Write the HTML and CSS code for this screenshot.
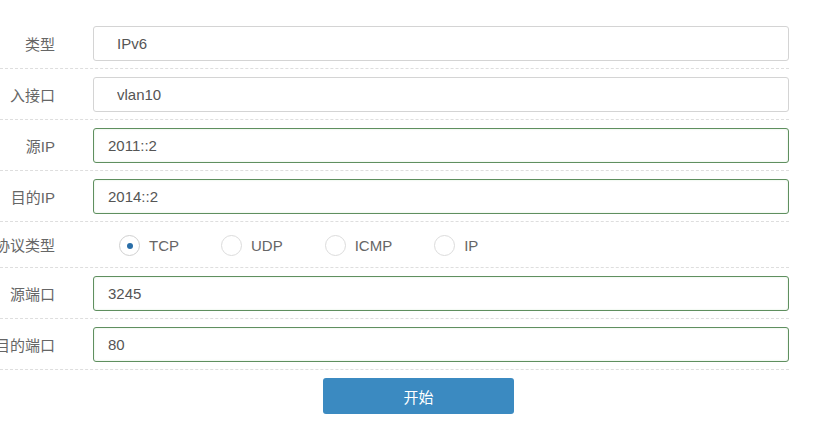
FILE: index.html
```html
<!DOCTYPE html>
<html lang="zh-CN">
<head>
    <meta charset="UTF-8">
    <meta name="viewport" content="width=device-width, initial-scale=1.0">
    <title>抓包</title>
    <link rel="stylesheet" href="styles.css">
</head>
<body>
    <form class="form" id="captureForm">
        <div class="row">
            <label class="label">类型</label>
            <div class="field"><input class="input input-plain" type="text" value="IPv6" readonly></div>
        </div>
        <div class="row">
            <label class="label">入接口</label>
            <div class="field"><input class="input input-plain" type="text" value="vlan10" readonly></div>
        </div>
        <div class="row">
            <label class="label">源IP</label>
            <div class="field"><input class="input" type="text" value="2011::2"></div>
        </div>
        <div class="row">
            <label class="label">目的IP</label>
            <div class="field"><input class="input" type="text" value="2014::2"></div>
        </div>
        <div class="row row-radio">
            <label class="label">协议类型</label>
            <div class="field radios">
                <label class="radio"><input type="radio" name="proto" checked><span class="dot"></span>TCP</label>
                <label class="radio"><input type="radio" name="proto"><span class="dot"></span>UDP</label>
                <label class="radio"><input type="radio" name="proto"><span class="dot"></span>ICMP</label>
                <label class="radio"><input type="radio" name="proto"><span class="dot"></span>IP</label>
            </div>
        </div>
        <div class="row">
            <label class="label">源端口</label>
            <div class="field"><input class="input" type="text" value="3245"></div>
        </div>
        <div class="row">
            <label class="label">目的端口</label>
            <div class="field"><input class="input" type="text" value="80"></div>
        </div>
        <div class="actions">
            <button type="submit" class="btn">开始</button>
        </div>
    </form>
</body>
</html>
```

FILE: styles.css
```css
body {
    margin: 0;
    background: #fff;
    font-family: "Liberation Sans", Arial, "Noto Sans CJK SC", sans-serif;
    color: #555;
    overflow: hidden;
}

.form {
    width: 789px;
    padding-top: 18px;
}

.row {
    display: flex;
    align-items: center;
    height: 50px;
    border-bottom: 1px dashed #dedede;
}

.row-radio {
    height: 45px;
}

.label {
    flex: 0 0 55px;
    min-width: 0;
    display: flex;
    justify-content: flex-end;
    white-space: nowrap;
    font-size: 15px;
    color: #666;
}

.field {
    flex: 1;
    margin-left: 38px;
}

.input {
    display: block;
    box-sizing: border-box;
    width: 100%;
    height: 35px;
    padding: 0 14px;
    border: 1px solid #5f8f5f;
    border-radius: 3px;
    box-shadow: inset 0 0 2px #d6ecd6;
    font-family: "Liberation Sans", Arial, sans-serif;
    font-size: 15px;
    color: #555;
    outline: none;
}

.input-plain {
    padding-left: 23px;
    border-color: #d4d4d4;
    box-shadow: none;
}

.radios {
    display: flex;
    align-items: center;
    margin-left: 64px;
    margin-top: 2px;
}

.radio {
    display: flex;
    align-items: center;
    margin-right: 42px;
    font-size: 15px;
    color: #666;
}

.radio input {
    display: none;
}

.dot {
    position: relative;
    width: 21px;
    height: 21px;
    box-sizing: border-box;
    border: 1px solid #dcdcdc;
    border-radius: 50%;
    margin-right: 9px;
}

.radio input:checked + .dot {
    border-color: #d0d0d0;
}

.radio input:checked + .dot::after {
    content: "";
    position: absolute;
    left: 7px;
    top: 7px;
    width: 6px;
    height: 6px;
    border-radius: 50%;
    background: #2a6ea8;
}

.actions {
    padding-top: 8px;
    padding-left: 323px;
}

.btn {
    width: 191px;
    height: 36px;
    background-color: #3b8ac1;
    color: #fff;
    border: none;
    border-radius: 3px;
    font-family: "Noto Sans CJK SC", sans-serif;
    font-size: 15px;
    cursor: pointer;
}

.btn:hover {
    background-color: #2f76a8;
}
```
